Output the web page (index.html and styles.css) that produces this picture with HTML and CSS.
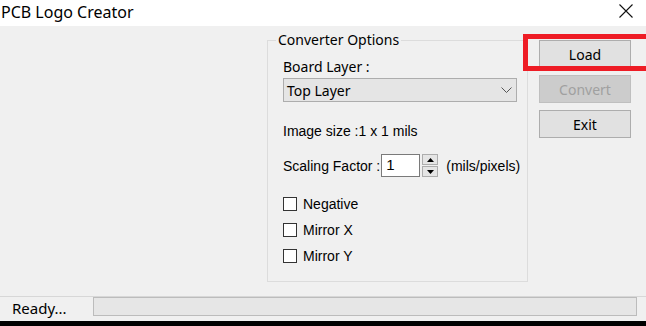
FILE: index.html
```html
<!DOCTYPE html>
<html lang="en">
<head>
  <meta charset="UTF-8" />
  <title>PCB Logo Creator</title>
  <link rel="stylesheet" href="styles.css">
</head>
<body>
  <div class="window">
    <div class="titlebar">
      <span class="title">PCB Logo Creator</span>
      <svg class="close" width="14" height="14" viewBox="0 0 14 14">
        <path d="M0.5 0.5 L13.5 13.5 M13.5 0.5 L0.5 13.5" stroke="#111" stroke-width="1.1" fill="none" />
      </svg>
    </div>

    <div class="main">
      <div class="canvas"></div>

      <fieldset class="options">
        <legend>Converter Options</legend>
        <div class="label">Board Layer :</div>
        <div class="combo">
          <span>Top Layer</span>
          <svg width="11" height="6" viewBox="0 0 11 6">
            <path d="M0.5 0.5 L5.5 5.5 L10.5 0.5" stroke="#555" stroke-width="1" fill="none" />
          </svg>
        </div>
        <div class="info">Image size :1 x 1 mils</div>
        <div class="scaling">
          <span>Scaling Factor :</span>
          <div class="numbox">1</div>
          <div class="spinner">
            <div class="spin up"><svg width="7" height="4" viewBox="0 0 7 4"><path d="M0 4 L3.5 0 L7 4 Z" fill="#000" /></svg></div>
            <div class="spin down"><svg width="7" height="4" viewBox="0 0 7 4"><path d="M0 0 L3.5 4 L7 0 Z" fill="#000" /></svg></div>
          </div>
          <span class="unit">(mils/pixels)</span>
        </div>
        <div class="check"><span class="box"></span>Negative</div>
        <div class="check"><span class="box"></span>Mirror X</div>
        <div class="check"><span class="box"></span>Mirror Y</div>
      </fieldset>

      <div class="actions">
        <button>Load</button>
        <button disabled>Convert</button>
        <button>Exit</button>
      </div>

      <div class="highlight"></div>
    </div>

    <div class="statusbar">
      <span class="status">Ready...</span>
      <div class="progress"></div>
    </div>
    <div class="edge"></div>
  </div>
</body>
</html>
```

FILE: styles.css
```css
body {
  margin: 0;
  background: #000;
  font-family: "Noto Sans", sans-serif;
}
.window {
  width: 646px;
  height: 326px;
  overflow: hidden;
  display: flex;
  flex-direction: column;
}
.titlebar {
  height: 26px;
  background: #fff;
  display: flex;
  align-items: center;
  justify-content: space-between;
  padding-right: 13px;
}
.title {
  font-size: 16px;
  color: #000;
  line-height: 20px;
  margin-top: -2px;
  margin-left: 1px;
}
.close {
  margin-top: -4px;
}
.main {
  position: relative;
  height: 270px;
  background: #f0f0f0;
  display: flex;
  align-items: flex-start;
  padding-top: 6px;
  box-sizing: border-box;
}
.canvas {
  width: 267px;
  flex-shrink: 0;
}
.options {
  width: 261px;
  height: 250px;
  box-sizing: border-box;
  margin: 0;
  padding: 0 10px 0 15px;
  border: 1px solid #dcdcdc;
  flex-shrink: 0;
}
.options legend {
  font-size: 14px;
  line-height: 16px;
  padding: 0 2px;
  margin-left: -7px;
  color: #000;
}
.label {
  margin-top: 10px;
  font-size: 14px;
  line-height: 18px;
}
.combo {
  margin-top: 2px;
  height: 24px;
  box-sizing: border-box;
  background: #e5e5e5;
  border: 1px solid #adadad;
  display: flex;
  align-items: center;
  justify-content: space-between;
  padding: 0 4px 0 3px;
  font-size: 14px;
}
.info {
  margin-top: 21px;
  font-family: "Liberation Sans", sans-serif;
  font-size: 14px;
  line-height: 16px;
}
.scaling {
  margin-top: 15px;
  margin-right: -8px;
  display: flex;
  align-items: center;
  height: 23px;
  font-family: "Liberation Sans", sans-serif;
  font-size: 14px;
  white-space: nowrap;
}
.scaling > * {
  flex-shrink: 0;
}
.numbox {
  width: 39px;
  height: 23px;
  box-sizing: border-box;
  margin-left: 1px;
  background: #fff;
  border: 1px solid #7a7a7a;
  padding: 1px 4px;
  line-height: 18px;
  font-size: 15px;
}
.spinner {
  display: flex;
  flex-direction: column;
  gap: 1px;
  margin-left: 2px;
}
.spin {
  width: 16px;
  height: 11px;
  box-sizing: border-box;
  background: #e5e5e5;
  border: 1px solid #adadad;
  display: flex;
  align-items: center;
  justify-content: center;
}
.unit {
  margin-left: 8px;
}
.check {
  display: flex;
  align-items: center;
  height: 14px;
  margin-top: 12px;
  font-family: "Liberation Sans", sans-serif;
  font-size: 14px;
}
.scaling + .check {
  margin-top: 20px;
}
.box {
  width: 14px;
  height: 14px;
  box-sizing: border-box;
  border: 1px solid #333;
  background: #fff;
  margin-right: 6px;
}
.actions {
  margin-left: 11px;
  margin-top: 8px;
  display: flex;
  flex-direction: column;
  gap: 7px;
}
.actions button {
  width: 92px;
  height: 28px;
  background: #e1e1e1;
  border: 1px solid #adadad;
  font-family: "Noto Sans", sans-serif;
  font-size: 14px;
  color: #000;
  padding: 0;
}
.actions button:disabled {
  background: #cccccc;
  border-color: #bfbfbf;
  color: #a0a0a0;
}
.highlight {
  position: absolute;
  left: 523px;
  top: 8px;
  width: 140px;
  height: 37px;
  box-sizing: border-box;
  border: 5px solid #ee1c25;
}
.statusbar {
  height: 25px;
  box-sizing: border-box;
  background: #f0f0f0;
  border-top: 1px solid #d7d7d7;
  display: flex;
  align-items: flex-start;
}
.status {
  width: 81px;
  padding-left: 12px;
  font-size: 15px;
  line-height: 23px;
}
.progress {
  width: 544px;
  height: 19px;
  box-sizing: border-box;
  background: #e6e6e6;
  border: 1px solid #bcbcbc;
}
.edge {
  height: 5px;
  background: #000;
}
```
